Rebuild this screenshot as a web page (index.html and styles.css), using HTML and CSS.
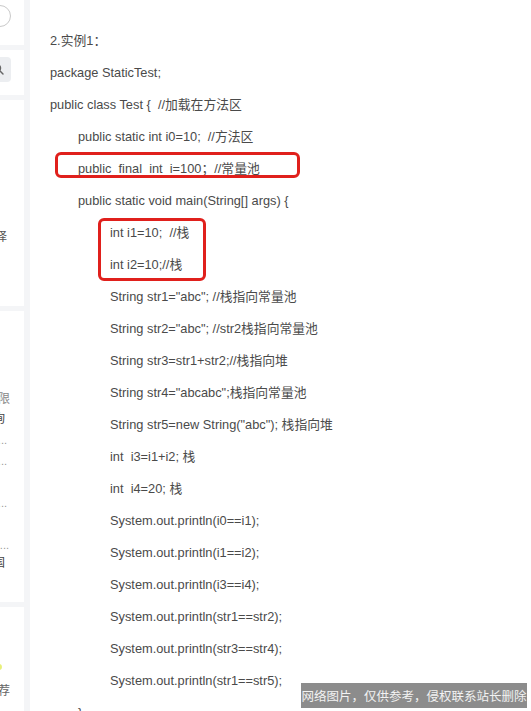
FILE: index.html
```html
<!DOCTYPE html>
<html lang="zh">
<head>
<meta charset="utf-8">
<link rel="stylesheet" href="styles.css">
</head>
<body>
<div class="page">
  <aside class="side">
    <div class="card c1"><span class="circle"></span></div>
    <div class="card c2"><span class="search"><svg width="14" height="14" viewBox="0 0 14 14"><circle cx="5" cy="5" r="3.6" fill="none" stroke="#666" stroke-width="1.3"/><path d="M7.6 7.6 L11 11" stroke="#666" stroke-width="1.4" stroke-linecap="round"/></svg></span></div>
    <div class="card c3"><div class="frag f-a">选择</div></div>
    <div class="card c4">
      <div class="frag g1">权限</div>
      <div class="frag g2">查询</div>
      <div class="frag g3 small">...</div>
      <div class="frag g4 small">...</div>
      <div class="frag g5 small">...</div>
      <div class="frag g6 small">li...</div>
      <div class="frag g7">中国</div>
    </div>
    <div class="card c5">
      <span class="dot"></span>
      <div class="frag h1">推荐</div>
    </div>
  </aside>
  <main class="main">
    <p class="l0">2.实例1：</p>
    <p class="l0">package StaticTest;</p>
    <p class="l0">public class Test {&nbsp; //加载在方法区</p>
    <p class="l1">public static int i0=10;&nbsp; //方法区</p>
    <p class="l1">public&nbsp; final&nbsp; int&nbsp; i=100；//常量池</p>
    <p class="l1">public static void main(String[] args) {</p>
    <p class="l2">int i1=10;&nbsp; //栈</p>
    <p class="l2">int i2=10;//栈</p>
    <p class="l2">String str1="abc"; //栈指向常量池</p>
    <p class="l2">String str2="abc"; //str2栈指向常量池</p>
    <p class="l2">String str3=str1+str2;//栈指向堆</p>
    <p class="l2">String str4="abcabc";栈指向常量池</p>
    <p class="l2">String str5=new String("abc"); 栈指向堆</p>
    <p class="l2">int&nbsp; i3=i1+i2; 栈</p>
    <p class="l2">int&nbsp; i4=20; 栈</p>
    <p class="l2">System.out.println(i0==i1);</p>
    <p class="l2">System.out.println(i1==i2);</p>
    <p class="l2">System.out.println(i3==i4);</p>
    <p class="l2">System.out.println(str1==str2);</p>
    <p class="l2">System.out.println(str3==str4);</p>
    <p class="l2">System.out.println(str1==str5);</p>
    <p class="l1">}</p>
    <span class="mark m1"></span>
    <span class="mark m2"></span>
    <div class="wm">网络图片，仅供参考，侵权联系站长删除</div>
  </main>
</div>
</body>
</html>
```
FILE: styles.css
```css
* { box-sizing: border-box; }
html, body {
  margin: 0;
  padding: 0;
  background: #f4f5f7;
  height: 711px;
  overflow: hidden;
}
.page {
  display: flex;
  height: 711px;
  font-family: "Liberation Sans", Arial, "Noto Sans CJK SC", sans-serif;
}
.side {
  width: 24px;
  flex: none;
  display: flex;
  flex-direction: column;
  gap: 5px;
  overflow: hidden;
}
.card {
  background: #fff;
  position: relative;
  overflow: hidden;
}
.c1 { height: 45px; }
.c2 { height: 45px; }
.c3 { height: 206px; }
.c4 { height: 291px; }
.c5 { flex: 1; }
.circle {
  position: absolute;
  left: -11px;
  top: 5px;
  width: 22px;
  height: 22px;
  border: 1px solid #c9c9c9;
  border-radius: 50%;
}
.search {
  position: absolute;
  left: -16px;
  top: 7px;
  width: 27px;
  height: 25px;
  background: #eceef1;
  border-radius: 4px;
  display: flex;
  align-items: center;
  justify-content: flex-end;
  padding-right: 5px;
}
.frag {
  position: absolute;
  width: 60px;
  display: flex;
  justify-content: flex-end;
  white-space: nowrap;
  font-size: 12px;
  color: #555;
  line-height: 16px;
}
.frag.small { color: #999; font-size: 11px; }
.f-a { top: 129px; right: 17px; }
.g1 { top: 80px; right: 14px; color: #888; }
.g2 { top: 100px; right: 19px; color: #444; }
.g3 { top: 121px; right: 17px; }
.g4 { top: 142px; right: 17px; }
.g5 { top: 184px; right: 17px; }
.g6 { top: 226px; right: 15px; }
.g7 { top: 244px; right: 19px; color: #444; }
.h1 { top: 76px; right: 14px; color: #666; }
.dot {
  position: absolute;
  left: -4px;
  top: 57px;
  width: 6px;
  height: 6px;
  border-radius: 50%;
  background: #e8f07a;
}
.main {
  flex: 1;
  margin-left: 6px;
  background: #fff;
  position: relative;
  padding-top: 25px;
  padding-left: 20px;
  color: #4a4a4a;
  font-size: 12.8px;
}
.main p {
  margin: 0;
  line-height: 32px;
  white-space: nowrap;
}
.l1 { padding-left: 28px; }
.l2 { padding-left: 60px; }
.mark {
  position: absolute;
  border: 3px solid #e0201c;
  border-radius: 6px;
}
.m1 { left: 25px; top: 152px; width: 245px; height: 26px; }
.m2 { left: 68px; top: 218px; width: 108px; height: 63px; }
.wm {
  position: absolute;
  left: 271px;
  top: 683px;
  width: 226px;
  height: 25px;
  background: rgba(120,120,120,0.85);
  color: #f2f2f2;
  font-size: 12.5px;
  line-height: 25px;
  text-align: center;
  white-space: nowrap;
  overflow: hidden;
  font-family: "Noto Sans CJK SC", sans-serif;
}
```
